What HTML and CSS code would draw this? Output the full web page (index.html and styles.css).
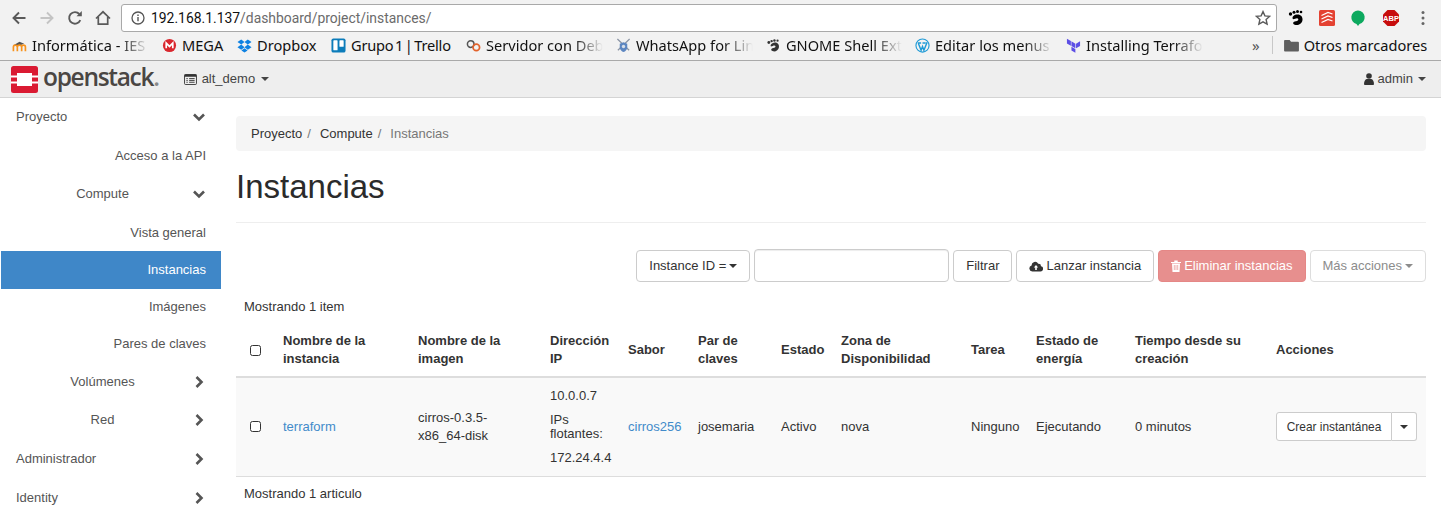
FILE: index.html
```html
<!DOCTYPE html>
<html lang="es">
<head>
<meta charset="utf-8">
<title>Instancias - OpenStack Dashboard</title>
<link rel="stylesheet" href="styles.css">
</head>
<body>
<header class="browser">
  <div class="toolbar">
    <div class="nav-btns">
      <svg class="tool" viewBox="0 0 16 16"><path d="M14.5 8H3M8 2.5 2.5 8 8 13.5" fill="none" stroke="#5a5a5a" stroke-width="1.9"/></svg>
      <svg class="tool" viewBox="0 0 16 16"><path d="M1.5 8H13M8 2.5 13.500 8 8 13.500" fill="none" stroke="#c4c4c4" stroke-width="1.9"/></svg>
      <svg class="tool" viewBox="0 0 16 16"><path d="M13.300 10.200A5.800 5.800 0 1 1 12.300 4" fill="none" stroke="#5a5a5a" stroke-width="1.9"/><path d="M9.500 6.300h5.300V1z" fill="#5a5a5a"/></svg>
      <svg class="tool" viewBox="0 0 16 16"><path d="M1 8.500 8 1.800l7 6.700M3.300 7v7.200h9.400V7" fill="none" stroke="#5a5a5a" stroke-width="1.700"/></svg>
    </div>
    <div class="omnibox">
      <svg class="info" viewBox="0 0 14 14"><circle cx="7" cy="7" r="6" fill="none" stroke="#555" stroke-width="1.300"/><path d="M7 6v4.200M7 3.600v1.300" stroke="#555" stroke-width="1.400"/></svg>
      <span class="url"><span class="host">192.168.1.137</span>/dashboard/project/instances/</span>
      <svg class="star" viewBox="0 0 16 16"><path d="m8 1.600 1.900 4.300 4.700.5-3.500 3.100 1 4.600L8 11.800l-4.100 2.300 1-4.600L1.400 6.400l4.700-.5z" fill="none" stroke="#5a5a5a" stroke-width="1.400"/></svg>
    </div>
    <div class="exts">
      <svg class="ext" viewBox="0 0 18 18"><path d="M9.500 5.500c3.800-.6 6.500 2 6 5.500-.5 3.800-4 5.600-7 5-2.300-.4-3-2-1.800-3 1.200-1 3.200-.6 4.300-1.800.8-.9.200-2-1-2-1.500 0-3 1.300-4 .9C4.700 9 6 6 9.500 5.500z" fill="#000"/><circle cx="3.500" cy="5" r="1.700"/><circle cx="7" cy="3.300" r="1.500"/><circle cx="10.500" cy="2.600" r="1.500"/><circle cx="14" cy="3" r="1.300"/></svg>
      <svg class="ext" viewBox="0 0 18 18"><rect x="1" y="1" width="16" height="16" rx="1.500" fill="#e44232"/><path d="M3.500 6.500 10 3.500l4.500 1.500M3.500 10 10 7l4.500 1.500M3.500 13.500 10 10.500l4.500 1.500" fill="none" stroke="#fff" stroke-width="1.300"/></svg>
      <svg class="ext" viewBox="0 0 18 18"><path d="M9 1.500a6.800 6.800 0 0 1 1.500 13.400L9 17l-1.500-2.100A6.800 6.800 0 0 1 9 1.500z" fill="#0da95f"/></svg>
      <svg class="ext abp-ext" viewBox="0 0 18 18"><path d="M5.500 1h7L17 5.500v7L12.500 17h-7L1 12.500v-7z" fill="#c70d0d"/><text x="9" y="11.800" class="abp">ABP</text></svg>
      <svg class="ext dots" viewBox="0 0 18 18"><circle cx="9" cy="3.500" r="1.500" fill="#666"/><circle cx="9" cy="9" r="1.500" fill="#666"/><circle cx="9" cy="14.500" r="1.500" fill="#666"/></svg>
    </div>
  </div>
  <div class="bookmarks">
    <a class="bm">
      <svg class="fav" viewBox="0 0 16 16"><path d="M2 7.500 8 4l5 2-5 2z" fill="#555"/><path d="M1.500 14V9.500c0-1.500 1-2 2-2s2 .5 2.200 2V14M5.700 14V9.500c0-1.500 1-2 2.300-2s2.200.5 2.300 2V14M10.300 9.500c0-1.500 1-2 2-2s2 .5 2 2V14" fill="none" stroke="#f7931e" stroke-width="1.800"/></svg>
      <span class="bm-text fade w-a">Informática - IES</span>
    </a>
    <a class="bm">
      <svg class="fav" viewBox="0 0 16 16"><circle cx="8" cy="8" r="7" fill="#d9272e"/><path d="M4.500 11V5.500L8 9l3.500-3.500V11" fill="none" stroke="#fff" stroke-width="1.800"/></svg>
      <span class="bm-text w-b">MEGA</span>
    </a>
    <a class="bm">
      <svg class="fav" viewBox="0 0 16 16"><path d="M4.500 1.500 0.500 4.200 4.500 7l3.500-2.800zM11.500 1.500l4 2.700L11.500 7 8 4.200zM4.500 7 .5 9.800l4 2.700L8 9.800zM11.500 7l4 2.800-4 2.700L8 9.800zM4.700 13.300 8 11l3.300 2.300L8 15.500z" fill="#0f82e2"/></svg>
      <span class="bm-text w-c">Dropbox</span>
    </a>
    <a class="bm">
      <svg class="fav" viewBox="0 0 16 16"><rect x=".5" y=".5" width="15" height="15" rx="2" fill="#0c7cba"/><rect x="2.500" y="2.500" width="4.500" height="10.500" rx=".6" fill="#fff"/><rect x="9" y="2.500" width="4.500" height="6.800" rx=".6" fill="#fff"/></svg>
      <span class="bm-text w-d">Grupo 1 | Trello</span>
    </a>
    <a class="bm">
      <svg class="fav" viewBox="0 0 16 16"><circle cx="5" cy="6.500" r="3.500" fill="none" stroke="#555" stroke-width="1.600"/><circle cx="11" cy="10" r="3.500" fill="none" stroke="#e2622b" stroke-width="1.800"/></svg>
      <span class="bm-text fade w-e">Servidor con Deb</span>
    </a>
    <a class="bm">
      <svg class="fav" viewBox="0 0 16 16"><path d="M1.500 1 14 13M14.500 1 2 13" stroke="#8a94a5" stroke-width="1.300"/><path d="M8 4.500 12 6v4c0 2.500-2 4-4 5-2-1-4-2.500-4-5V6z" fill="#5d86c0"/><circle cx="8" cy="9" r="1.800" fill="#d7dfe8"/></svg>
      <span class="bm-text fade w-f">WhatsApp for Lin</span>
    </a>
    <a class="bm">
      <svg class="fav" viewBox="0 0 16 16"><path d="M8.500 5c3.300-.5 5.800 1.800 5.300 4.800-.4 3.300-3.500 4.900-6.200 4.400-2-.4-2.600-1.800-1.600-2.700 1-.9 2.800-.5 3.800-1.600.7-.8.200-1.800-.9-1.800-1.300 0-2.600 1.100-3.500.8C4.200 8.500 5.400 5.500 8.500 5z" fill="#333"/><circle cx="3" cy="4.800" r="1.500" fill="#333"/><circle cx="6" cy="3.300" r="1.300" fill="#333"/><circle cx="9" cy="2.600" r="1.300" fill="#333"/><circle cx="12.300" cy="2.800" r="1.200" fill="#333"/></svg>
      <span class="bm-text fade w-g">GNOME Shell Ext</span>
    </a>
    <a class="bm">
      <svg class="fav" viewBox="0 0 16 16"><circle cx="8" cy="8" r="7" fill="none" stroke="#1e9ad6" stroke-width="1.200"/><path d="M3.500 5.500 6.500 13 8 9l1.500 4 3-7.500M3 5.300h3.500M8 5.300h3M11.300 5.300h2" fill="none" stroke="#1e9ad6" stroke-width="1.500"/></svg>
      <span class="bm-text fade w-h">Editar los menus</span>
    </a>
    <a class="bm">
      <svg class="fav" viewBox="0 0 16 16"><path d="M5.800 3.500 10 6v5L5.800 8.500zM10.700 6 15 3.500v5L10.700 11zM1 .8 5.200 3.300v5L1 5.800zM5.800 9.200 10 11.700v4L5.800 13.300z" fill="#5c4ee5"/></svg>
      <span class="bm-text fade w-i">Installing Terrafo</span>
    </a>
    <span class="more">»</span>
    <span class="sep"></span>
    <a class="bm other">
      <svg class="folder" viewBox="0 0 16 14"><path d="M1 1h5l1.500 2H15a1 1 0 0 1 1 1v8.500a1 1 0 0 1-1 1H1a1 1 0 0 1-1-1V2a1 1 0 0 1 1-1z" fill="#5f5f5f"/></svg>
      <span class="bm-text">Otros marcadores</span>
    </a>
  </div>
</header>

<nav class="topnav">
  <a class="brand">
    <svg class="logo" viewBox="0 0 27 27"><rect width="27" height="27" rx="2.500" fill="#da1a32"/><rect x="6" y="7" width="15" height="13" fill="#fff"/><rect y="9.500" width="6" height="2" fill="#fff"/><rect y="15.500" width="6" height="2" fill="#fff"/><rect x="21" y="9.500" width="6" height="2" fill="#fff"/><rect x="21" y="15.500" width="6" height="2" fill="#fff"/></svg>
    <span class="brand-name">openstack<span class="brand-dot">.</span></span>
  </a>
  <a class="project">
    <svg class="project-icon" viewBox="0 0 14 12"><rect x=".5" y=".5" width="13" height="11" rx="1.200" fill="none" stroke="#333"/><rect x=".5" y=".5" width="13" height="2.500" fill="#333"/><path d="M2.500 5h1.500M5.500 5h6M2.500 7h1.500M5.500 7h6M2.500 9h1.500M5.500 9h6" stroke="#333"/></svg>
    alt_demo <span class="caret"></span>
  </a>
  <a class="user">
    <svg class="user-icon" viewBox="0 0 10 12"><circle cx="5" cy="3" r="2.800" fill="#333"/><path d="M0 11.200C0 8 1.500 6 3 6h4c1.500 0 3 2 3 5.200 0 .5-.3.800-1 .8H1c-.7 0-1-.3-1-.8z" fill="#333"/></svg>
    admin <span class="caret"></span>
  </a>
</nav>

<div class="layout">
  <aside class="sidebar">
    <a class="side-row top h-38"><span class="side-label">Proyecto</span><svg class="chev" viewBox="0 0 14 14"><path d="M2 4.500 7 9.500l5-5" /></svg></a>
    <a class="side-row leaf h-39">Acceso a la API</a>
    <a class="side-row group h-38"><span class="side-label">Compute</span><svg class="chev" viewBox="0 0 14 14"><path d="M2 4.500 7 9.500l5-5" /></svg></a>
    <a class="side-row leaf h-38 nudge">Vista general</a>
    <a class="side-row leaf active h-38">Instancias</a>
    <a class="side-row leaf h-36">Imágenes</a>
    <a class="side-row leaf h-37">Pares de claves</a>
    <a class="side-row group h-39"><span class="side-label">Volúmenes</span><svg class="chev" viewBox="0 0 14 14"><path d="M4.500 2l5 5-5 5" /></svg></a>
    <a class="side-row group h-38"><span class="side-label">Red</span><svg class="chev" viewBox="0 0 14 14"><path d="M4.500 2l5 5-5 5" /></svg></a>
    <a class="side-row top h-39"><span class="side-label">Administrador</span><svg class="chev" viewBox="0 0 14 14"><path d="M4.500 2l5 5-5 5" /></svg></a>
    <a class="side-row top h-39"><span class="side-label">Identity</span><svg class="chev" viewBox="0 0 14 14"><path d="M4.500 2l5 5-5 5" /></svg></a>
  </aside>

  <main class="content">
    <ol class="breadcrumb">
      <li class="crumb">Proyecto<span class="slash">/</span></li>
      <li class="crumb">Compute<span class="slash">/</span></li>
      <li class="crumb current">Instancias</li>
    </ol>
    <h1 class="page-title">Instancias</h1>
    <div class="actions">
      <button class="btn caret-btn">Instance ID = <span class="caret"></span></button>
      <input class="filter-input" type="text" aria-label="Filtro">
      <button class="btn">Filtrar</button>
      <button class="btn"><svg class="btn-icon" viewBox="0 0 14 12"><path d="M3.300 11.500A3 3 0 0 1 2.600 5.600 3.500 3.500 0 0 1 9.200 3.700 2.500 2.500 0 0 1 12 6.200a2.700 2.700 0 0 1-1 5.300z" fill="#333"/><path d="M7 5 4.800 7.500h1.400v2.500h1.600V7.500h1.400z" fill="#fff"/></svg>Lanzar instancia</button>
      <button class="btn danger"><svg class="btn-icon trash" viewBox="0 0 10 12"><path d="M0 2h10v1H0zM3.300 2V.6h3.400V2M1 3.500h8l-.5 8.500h-7z" fill="#fff"/><path d="M3.300 5v5M5 5v5M6.700 5v5" stroke="#e78f8e" stroke-width=".7"/></svg>Eliminar instancias</button>
      <button class="btn muted caret-btn">Más acciones <span class="caret"></span></button>
    </div>
    <p class="count first">Mostrando 1 item</p>
    <table class="grid">
      <colgroup>
        <col class="c1"><col class="c2"><col class="c3"><col class="c4"><col class="c5"><col class="c6"><col class="c7"><col class="c8"><col class="c9"><col class="c10"><col class="c11"><col class="c12">
      </colgroup>
      <thead>
        <tr>
          <th class="check-cell"><span class="check"></span></th>
          <th>Nombre de la instancia</th>
          <th>Nombre de la imagen</th>
          <th>Dirección IP</th>
          <th>Sabor</th>
          <th>Par de claves</th>
          <th>Estado</th>
          <th>Zona de Disponibilidad</th>
          <th>Tarea</th>
          <th>Estado de energía</th>
          <th>Tiempo desde su creación</th>
          <th>Acciones</th>
        </tr>
      </thead>
      <tbody>
        <tr>
          <td class="check-cell"><span class="check"></span></td>
          <td><a class="link">terraform</a></td>
          <td>cirros-0.3.5-x86_64-disk</td>
          <td class="ip-cell">
            <p class="ip-line">10.0.0.7</p>
            <p class="ip-line">IPs flotantes:</p>
            <p class="ip-line">172.24.4.4</p>
          </td>
          <td><a class="link">cirros256</a></td>
          <td>josemaria</td>
          <td>Activo</td>
          <td>nova</td>
          <td>Ninguno</td>
          <td>Ejecutando</td>
          <td>0 minutos</td>
          <td>
            <div class="split">
              <button class="split-main">Crear instantánea</button>
              <button class="split-toggle"><span class="caret dark"></span></button>
            </div>
          </td>
        </tr>
      </tbody>
    </table>
    <p class="count last">Mostrando 1 articulo</p>
  </main>
</div>
</body>
</html>
```
FILE: styles.css
```css
* { box-sizing: border-box; }
html, body { margin: 0; padding: 0; height: 527px; overflow: hidden; }
body { background: #fff; color: #333; font: 13px/18px "Liberation Sans", Arial, sans-serif; }
a { color: inherit; text-decoration: none; }

/* Browser chrome */
.browser { background: #f2f2f2; border-bottom: 1px solid #a9a9a9; height: 61px; }
.toolbar { display: flex; align-items: center; height: 32px; padding-top: 4px; }
.nav-btns { display: flex; align-items: center; gap: 12px; width: 121px; padding-left: 11px; }
.tool { width: 16px; height: 16px; flex: none; }
.omnibox { display: flex; align-items: center; width: 1156px; height: 28px; background: #fff; border: 1px solid #a9a9a9; border-radius: 3px; padding: 0 5px 0 9px; }
.info { width: 14px; height: 14px; flex: none; }
.url { margin-left: 6px; flex: 1; font: 13.900px/20px Roboto, sans-serif; color: #6b6b6b; white-space: nowrap; }
.host { color: #111; }
.star { width: 16px; height: 16px; flex: none; }
.exts { display: flex; align-items: center; gap: 13px; padding-left: 10px; }
.ext { width: 18px; height: 18px; flex: none; }
.abp { font: bold 7.500px "Liberation Sans", sans-serif; fill: #fff; text-anchor: middle; }
.abp-ext { margin-left: 2px; }
.dots { margin-left: 1px; }
.bookmarks { display: flex; align-items: center; height: 28px; padding: 0 0 2px 12px; }
.bm { display: flex; align-items: center; gap: 5px; margin-right: 13px; flex: none; }
.fav { width: 15px; height: 15px; flex: none; }
.bm-text { display: block; font: 14.600px/20px "Noto Sans", sans-serif; color: #111; white-space: nowrap; overflow: hidden; }
.fade { -webkit-mask-image: linear-gradient(to right, #000 75%, transparent); mask-image: linear-gradient(to right, #000 75%, transparent); }
.w-a { width: 117px; }
.w-b { width: 42px; }
.w-c { width: 61px; }
.w-d { width: 102px; word-spacing: -2px; letter-spacing: -.2px; }
.w-e { width: 117px; }
.w-f { width: 117px; }
.w-g { width: 116px; }
.w-h { width: 118px; }
.w-i { width: 117px; }
.more { margin-left: 36px; font: 15px/20px "Noto Sans", sans-serif; color: #555; }
.sep { width: 1px; height: 18px; background: #c8c8c8; margin-left: 12px; }
.other { margin: 0 0 0 11px; }
.folder { width: 15px; height: 13px; flex: none; }

/* Navbar */
.topnav { display: flex; align-items: center; height: 37px; background: #eee; border-bottom: 1px solid #d4d4d4; padding: 0 15px 0 11px; color: #444; }
.brand { display: flex; align-items: center; gap: 5px; }
.logo { width: 27px; height: 27px; flex: none; }
.brand-name { font: 600 24.500px/30px "Open Sans", sans-serif; color: #4a4643; letter-spacing: -1.300px; margin-top: -4px; }
.brand-dot { color: #888; }
.project { display: flex; align-items: center; margin-left: 25px; gap: 5px; }
.project-icon { width: 13px; height: 11px; }
.user { display: flex; align-items: center; margin-left: auto; gap: 4px; }
.user-icon { width: 10px; height: 12px; }
.caret { display: inline-block; width: 0; height: 0; border-left: 4px solid transparent; border-right: 4px solid transparent; border-top: 4px solid currentColor; vertical-align: middle; margin-left: 1px; }
.caret.dark { color: #333; margin: 0; }

/* Layout */
.layout { display: flex; }
.sidebar { width: 221px; flex: none; padding-left: 1px; color: #555; }
.side-row { display: flex; align-items: center; padding-right: 15px; }
.leaf { justify-content: flex-end; }
.top { padding-left: 15px; }
.group { padding-left: 12px; }
.top .side-label { flex: 1; }
.group .side-label { flex: 1; text-align: center; }
.active { background: #3f87c8; color: #fff; }
.nudge { padding-top: 2px; }
.chev { width: 14px; height: 14px; flex: none; fill: none; stroke: #555; stroke-width: 2.600; }
.h-36 { height: 36px; }
.h-37 { height: 37px; }
.h-38 { height: 38px; }
.h-39 { height: 39px; }

/* Content */
.content { flex: 1; min-width: 0; padding: 18px 15px 0; }
.breadcrumb { display: flex; list-style: none; margin: 0; height: 35px; padding: 9px 15px 8px; background: #f5f5f5; border-radius: 4px; }
.crumb { color: #333; margin-right: 5px; }
.slash { color: #777; margin-left: 5px; padding-right: 4px; }
.current { color: #777; }
.page-title { margin: 18px 0 17px; font-size: 33px; line-height: 36px; font-weight: 400; color: #2b2b2b; padding-bottom: 17px; border-bottom: 1px solid #eee; }
.actions { display: flex; justify-content: flex-end; align-items: center; gap: 4px; margin-top: 26px; }
.btn { display: flex; align-items: center; gap: 3px; height: 32px; padding: 0 12px; font: 13px/18px "Liberation Sans", sans-serif; color: #333; background: #fff; border: 1px solid #ccc; border-radius: 4px; }
.caret-btn .caret { margin-left: 0; }
.btn-icon { width: 14px; height: 12px; flex: none; }
.trash { width: 10px; }
.danger { background: #e78f8e; border-color: #e58786; color: #fff; }
.muted { color: #8c8c8c; border-color: #ddd; }
.filter-input { width: 195px; height: 33px; border: 1px solid #ccc; border-radius: 4px; background: #fff; padding: 0 12px; box-shadow: inset 0 1px 1px rgba(0, 0, 0, .075); }
.count { margin: 0; padding-left: 8px; color: #333; }
.first { margin-top: 16px; }
.last { margin-top: 8px; }
.grid { width: 1190px; margin-top: 8px; border-collapse: collapse; table-layout: fixed; }
.c1 { width: 39px; }
.c2 { width: 135px; }
.c3 { width: 132px; }
.c4 { width: 78px; }
.c5 { width: 70px; }
.c6 { width: 83px; }
.c7 { width: 60px; }
.c8 { width: 130px; }
.c9 { width: 65px; }
.c10 { width: 99px; }
.c11 { width: 141px; }
.c12 { width: 158px; }
.grid th { height: 53px; padding: 0 8px; text-align: left; vertical-align: middle; font-weight: 700; color: #333; border-bottom: 2px solid #ddd; }
.grid td { height: 99px; padding: 0 8px; vertical-align: middle; background: #f9f9f9; border-bottom: 1px solid #ddd; }
.check-cell { text-align: left; }
.grid .check-cell { padding-left: 14px; }
.check { display: block; width: 11px; height: 11px; background: #fff; border: 1.500px solid #333; border-radius: 2.500px; }
.link { color: #428bca; }
.ip-line { margin: 0; line-height: 14px; padding: 5px 0; }
.split { display: flex; width: 141px; }
.split-main { height: 29px; width: 116px; padding: 0; font: 11.900px/16px "Liberation Sans", sans-serif; color: #333; background: #fff; border: 1px solid #ccc; border-radius: 3px 0 0 3px; }
.split-toggle { display: flex; align-items: center; justify-content: center; height: 29px; width: 25px; padding: 0; background: #fff; border: 1px solid #ccc; border-left: 0; border-radius: 0 3px 3px 0; }
```
